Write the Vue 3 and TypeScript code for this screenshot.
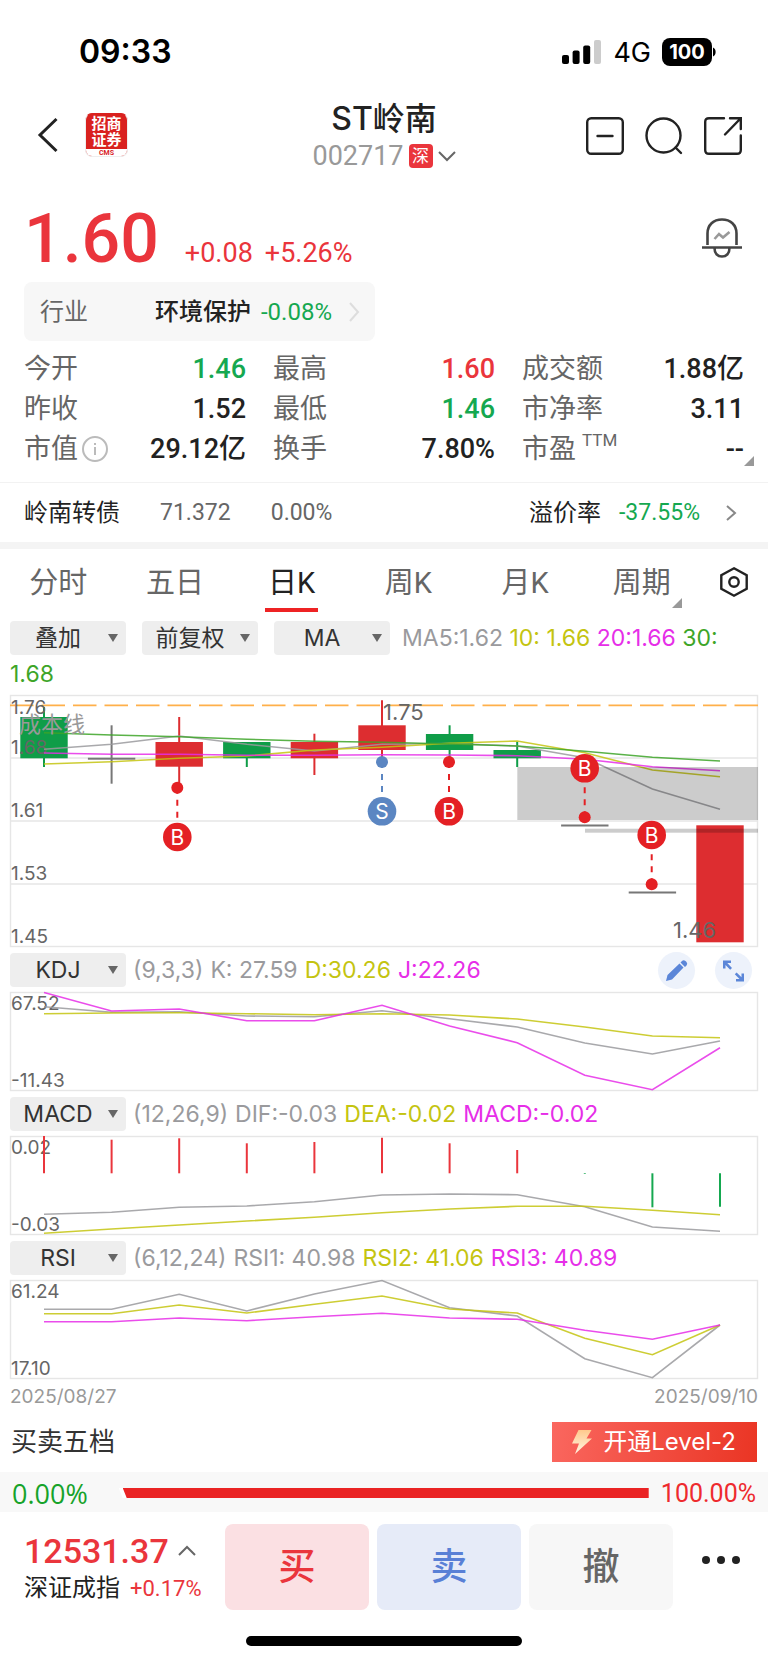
<script setup lang="ts">
import { ref } from 'vue'

interface Stat {
  label: string
  value: string
  tone?: 'up' | 'down'
  info?: boolean
  sup?: string
}

interface Series {
  tone: string
  values: number[]
}

interface Panel {
  name: string
  params: string
  legend: { tone: string; text: string }[]
  series: Series[]
  top: string
  bottom: string
  bars?: number[]
  tools?: boolean
}

interface Candle {
  tone: 'up' | 'down' | 'flat'
  top: number
  bottom: number
  high?: number
  low?: number
}

const stats: Stat[] = [
  { label: '今开', value: '1.46', tone: 'down' },
  { label: '最高', value: '1.60', tone: 'up' },
  { label: '成交额', value: '1.88亿' },
  { label: '昨收', value: '1.52' },
  { label: '最低', value: '1.46', tone: 'down' },
  { label: '市净率', value: '3.11' },
  { label: '市值', value: '29.12亿', info: true },
  { label: '换手', value: '7.80%' },
  { label: '市盈', value: '--', sup: 'TTM' },
]

const tabs = ['分时', '五日', '日K', '周K', '月K', '周期']
const activeTab = ref('日K')

const overlays = [
  { label: '叠加方式', value: '叠加' },
  { label: '复权方式', value: '前复权' },
  { label: '主图指标', value: 'MA' },
]

const candles: Candle[] = [
  { tone: 'down', top: 22, bottom: 63.3, high: 12, low: 72 },
  { tone: 'flat', top: 62.7, bottom: 64.7, high: 30.3, low: 88.7 },
  { tone: 'up', top: 47, bottom: 71.7, high: 22, low: 92 },
  { tone: 'down', top: 47, bottom: 63.3, high: 47, low: 72 },
  { tone: 'up', top: 47, bottom: 63.3, high: 38.7, low: 80 },
  { tone: 'up', top: 30.3, bottom: 55, high: 5.3, low: 64 },
  { tone: 'down', top: 39, bottom: 55, high: 30.3, low: 64 },
  { tone: 'down', top: 55, bottom: 63.3, high: 46.7, low: 72 },
  { tone: 'flat', top: 129.5, bottom: 131.5 },
  { tone: 'flat', top: 196.5, bottom: 198.5 },
  { tone: 'up', top: 130.3, bottom: 247.3 },
]

const averages: Series[] = [
  { tone: 'gray', values: [54.3, 49.3, 41, 49.3, 56, 49.3, 48.5, 51, 62.7, 94, 114.3] },
  { tone: 'olive', values: [69, 66.7, 63.3, 61, 55, 52.3, 48.3, 46, 57.7, 75, 81.7] },
  { tone: 'pink', values: [58, 59.3, 59.3, 60.3, 60.3, 59.7, 60, 60.7, 64.3, 71.7, 75.7] },
  { tone: 'green', values: [37.7, 40, 41.7, 44.3, 46.3, 47.3, 49, 51, 56.3, 62.3, 66] },
]

const priceLabels = [
  { text: '1.76', y: 18.5 },
  { text: '1.68', y: 59 },
  { text: '1.61', y: 122 },
  { text: '1.53', y: 185 },
  { text: '1.45', y: 248 },
]

const marks = [
  { kind: 'B', x: 167.3, dot: 92.7, badge: 142 },
  { kind: 'S', x: 372, dot: 67, badge: 116.3 },
  { kind: 'B', x: 439, dot: 67, badge: 116.3 },
  { kind: 'B', x: 574.7, dot: 122.3, badge: 73.3 },
  { kind: 'B', x: 641.7, dot: 189.3, badge: 140 },
]

const panels: Panel[] = [
  {
    name: 'KDJ',
    params: '(9,3,3)',
    tools: true,
    legend: [
      { tone: 'gray', text: 'K: 27.59' },
      { tone: 'olive', text: 'D:30.26' },
      { tone: 'pink', text: 'J:22.26' },
    ],
    series: [
      { tone: 'gray', values: [14.7, 20.3, 19.7, 24, 24.7, 18.7, 26.7, 35, 51, 62, 49] },
      { tone: 'olive', values: [21.7, 21, 20.7, 21.7, 22.7, 21.7, 23, 27, 35, 44, 45.7] },
      { tone: 'pink', values: [0.5, 19, 17, 28.7, 28.7, 13.3, 34, 50.7, 83.3, 97.7, 55.7] },
    ],
    top: '67.52',
    bottom: '-11.43',
  },
  {
    name: 'MACD',
    params: '(12,26,9)',
    legend: [
      { tone: 'gray', text: 'DIF:-0.03' },
      { tone: 'olive', text: 'DEA:-0.02' },
      { tone: 'pink', text: 'MACD:-0.02' },
    ],
    series: [
      { tone: 'gray', values: [78.3, 76.3, 71.3, 70, 65.7, 59, 58, 58.7, 70.7, 91, 95.3] },
      { tone: 'olive', values: [97.3, 93, 89, 85, 81.3, 76.7, 73, 70.3, 70.3, 74.3, 78.7] },
    ],
    top: '0.02',
    bottom: '-0.03',
    bars: [0, 3.7, 2.3, 7.3, 6, 1.7, 7.3, 14, 38, 71.3, 70.7],
  },
  {
    name: 'RSI',
    params: '(6,12,24)',
    legend: [
      { tone: 'gray', text: 'RSI1: 40.98' },
      { tone: 'olive', text: 'RSI2: 41.06' },
      { tone: 'pink', text: 'RSI3: 40.89' },
    ],
    series: [
      { tone: 'gray', values: [29.3, 29.3, 14.3, 31, 14, 0.5, 27.7, 36, 78.7, 97.7, 45] },
      { tone: 'olive', values: [33.7, 33.7, 25, 33, 24.3, 16, 29, 33, 58.3, 74.7, 45] },
      { tone: 'pink', values: [41.7, 41.7, 38, 40.7, 36.7, 33.3, 38, 39.3, 50.3, 59.3, 45] },
    ],
    top: '61.24',
    bottom: '17.10',
  },
]

const barZero = 37.3

function cx(index: number): number {
  return Math.round((34 + 67.6 * index) * 10) / 10
}

function points(values: number[]): string {
  return values.map((v, i) => `${cx(i)},${v}`).join(' ')
}
</script>

<template>
  <main class="page">
    <div class="status">
      <span class="clock">09:33</span>
      <span class="signal-group">
        <svg class="signal" viewBox="0 0 39 24" aria-hidden="true">
          <rect x="0" y="15" width="7" height="9" rx="2" />
          <rect x="10.600" y="10.500" width="7" height="13.500" rx="2" />
          <rect x="21.200" y="5.500" width="7" height="18.500" rx="2" />
          <rect class="dim" x="32" y="0" width="7" height="24" rx="2" />
        </svg>
        <span class="network">4G</span>
        <span class="battery">
          <span class="cell">100</span>
          <svg class="nub" viewBox="0 0 4 10" aria-hidden="true"><path d="M1 0.500C4.500 2 4.500 8 1 9.500Z" /></svg>
        </span>
      </span>
    </div>

    <header class="header">
      <div class="side">
        <button class="icon-btn" type="button" aria-label="返回">
          <svg class="back" viewBox="0 0 20 36"><path d="M18.500 2L2 18L18.500 34" /></svg>
        </button>
        <span class="brand">
          <span class="brand-name">招商<br />证券</span>
          <span class="brand-sub">CMS</span>
        </span>
      </div>
      <div class="title">
        <h1>ST岭南</h1>
        <button class="code" type="button">
          <span>002717</span>
          <span class="market">深</span>
          <svg class="caret" viewBox="0 0 18 10"><path d="M1 1L9 9L17 1" /></svg>
        </button>
      </div>
      <div class="side actions">
        <button class="icon-btn" type="button" aria-label="移出自选">
          <svg class="action" viewBox="0 0 38 38"><rect x="1.200" y="1.200" width="35.600" height="35.600" rx="4" /><path d="M11.500 19H26.500" /></svg>
        </button>
        <button class="icon-btn" type="button" aria-label="搜索">
          <svg class="action" viewBox="0 0 38 38"><circle cx="18.500" cy="18.500" r="17" /><path d="M30.500 30.500L36 36" /></svg>
        </button>
        <button class="icon-btn" type="button" aria-label="分享">
          <svg class="action" viewBox="0 0 38 38"><path d="M20 1.200H5Q1.200 1.200 1.200 5V33Q1.200 36.800 5 36.800H33Q36.800 36.800 36.800 33V18.500M21 17.500L36.500 1.500M26 1.200H36.800V12" /></svg>
        </button>
      </div>
    </header>

    <section class="quote">
      <strong class="price">1.60</strong>
      <span class="change">+0.08</span>
      <span class="change">+5.26%</span>
      <button class="icon-btn bell-btn" type="button" aria-label="提醒">
        <svg class="bell" viewBox="0 0 40 40">
          <path d="M5.500 27V15.500C5.500 7 11.500 1.500 20 1.500S34.500 7 34.500 15.500V27" />
          <path d="M0 29.500H40M12.500 30C12.500 35.500 15.500 38.500 20 38.500S27.500 35.500 27.500 30" />
          <path class="trend" d="M12.500 21L17 16L21 19.500L27.500 14" />
        </svg>
      </button>
    </section>

    <button class="industry" type="button">
      <span class="industry-label">行业</span>
      <span class="industry-name">环境保护</span>
      <span class="down">-0.08%</span>
      <svg class="more" viewBox="0 0 10 20"><path d="M1 1L9 10L1 19" /></svg>
    </button>

    <dl class="stats">
      <div v-for="s in stats" :key="s.label" class="stat">
        <dt>
          {{ s.label }}<sup v-if="s.sup">{{ s.sup }}</sup>
          <svg v-if="s.info" class="info" viewBox="0 0 26 26" aria-hidden="true">
            <circle cx="13" cy="13" r="12" />
            <path d="M13 11V19M13 7V9" />
          </svg>
        </dt>
        <dd :class="s.tone">{{ s.value }}</dd>
      </div>
      <svg class="corner stats-corner" viewBox="0 0 10 10" aria-hidden="true"><path d="M10 0V10H0Z" /></svg>
    </dl>

    <a class="bond" href="#bond">
      <span class="bond-name">岭南转债</span>
      <span class="bond-price">71.372</span>
      <span class="bond-rate">0.00%</span>
      <span class="bond-label">溢价率</span>
      <span class="down bond-premium">-37.55%</span>
      <svg class="more dark" viewBox="0 0 10 16"><path d="M1 1L9 8L1 15" /></svg>
    </a>

    <nav class="tabs">
      <button
        v-for="t in tabs"
        :key="t"
        type="button"
        class="tab"
        :class="{ active: t === activeTab }"
        @click="activeTab = t"
      >
        <span class="tab-text">{{ t }}<svg v-if="t === '周期'" class="corner tab-corner" viewBox="0 0 10 10" aria-hidden="true"><path d="M10 0V10H0Z" /></svg></span>
      </button>
      <button class="icon-btn settings" type="button" aria-label="设置">
        <svg class="hex" viewBox="0 0 28 30"><path d="M14 1.300L26.700 8.200V21.800L14 28.700L1.300 21.800V8.200Z" /><circle cx="14" cy="15" r="4.700" /></svg>
      </button>
    </nav>

    <section class="charts">
      <div class="overlay-row">
        <span v-for="o in overlays" :key="o.value" class="picker">
          <select :aria-label="o.label"><option>{{ o.value }}</option></select>
        </span>
        <span class="gray">MA5:1.62</span>&nbsp;<span class="olive">10: 1.66</span>&nbsp;<span class="pink">20:1.66</span>&nbsp;<span class="green">30:</span><wbr /><span class="green">1.68</span>
      </div>

      <svg class="chart" viewBox="0 0 748 252" role="img" aria-label="日K线">
        <rect class="frame" x="0.500" y="0.500" width="747" height="251" />
        <path class="frame" d="M0 63H748M0 126H748M0 189H748" />
        <path class="cost" d="M0 10.300H748" />
        <g v-for="(c, i) in candles" :key="i" :class="['candle', c.tone]">
          <path v-if="c.high !== undefined" :d="`M${cx(i)} ${c.high}V${c.low}`" />
          <rect :x="cx(i) - 23.700" :y="c.top" width="47.400" :height="c.bottom - c.top" />
        </g>
        <text v-for="l in priceLabels" :key="l.text" class="axis" x="1" :y="l.y">{{ l.text }}</text>
        <polyline v-for="a in averages" :key="a.tone" :class="['line', a.tone]" :points="points(a.values)" />
        <text class="cost-label" x="9" y="37">成本线</text>
        <rect class="gap" x="507.300" y="72" width="240.700" height="53" />
        <rect class="gap" x="575" y="133.700" width="173" height="4" />
        <text class="extreme" x="373" y="24.500">1.75</text>
        <text class="extreme" x="663" y="242.500">1.46</text>
        <g v-for="m in marks" :key="m.x" :class="['mark', m.kind]">
          <path :d="`M${m.x} ${m.dot}V${m.badge}`" />
          <circle :cx="m.x" :cy="m.dot" r="6" />
          <circle :cx="m.x" :cy="m.badge" r="14.300" />
          <text :x="m.x" :y="m.badge + 8">{{ m.kind }}</text>
        </g>
      </svg>

      <template v-for="p in panels" :key="p.name">
        <div class="panel-row">
          <span class="picker">
            <select :aria-label="p.name + ' 指标'"><option>{{ p.name }}</option></select>
          </span>
          <span class="gray">{{ p.params }}</span>
          <span v-for="g in p.legend" :key="g.text" :class="g.tone">{{ g.text }}</span>
          <span v-if="p.tools" class="tools">
            <button class="round" type="button" aria-label="画线">
              <svg viewBox="0 0 37 37"><path d="M8 29L9.500 23L21.500 11.500L25.500 15.500L14 27.500Z M22.500 10.500L24 9Q25.500 7.500 27.500 9L28.500 10Q30 11.500 28.500 13.500L27 15Z" /></svg>
            </button>
            <button class="round" type="button" aria-label="全屏">
              <svg viewBox="0 0 37 37"><path d="M8 8.500H16V11H12.300L17 16L15.200 17.800L10.500 13V16.500H8Z M29 29.500H21V27H24.500L19.800 22.300L21.600 20.500L26.500 25.200V21.500H29Z" /></svg>
            </button>
          </span>
        </div>
        <svg class="chart" viewBox="0 0 748 99" role="img" :aria-label="p.name">
          <rect class="frame" x="0.500" y="0.500" width="747" height="98" />
          <text class="axis" x="1" y="18">{{ p.top }}</text>
          <text class="axis" x="1" y="94.500">{{ p.bottom }}</text>
          <path
            v-for="(b, i) in p.bars ?? []"
            :key="i"
            :class="['bar', b < barZero ? 'up' : 'down']"
            :d="`M${cx(i)} ${barZero}V${b}`"
          />
          <polyline v-for="s in p.series" :key="s.tone" :class="['line', s.tone]" :points="points(s.values)" />
        </svg>
      </template>

      <div class="dates"><span>2025/08/27</span><span>2025/09/10</span></div>
    </section>

    <section class="depth">
      <h2>买卖五档</h2>
      <button class="level2" type="button">
        <svg class="bolt" viewBox="0 0 20 24">
          <defs>
            <linearGradient id="boltFill" x1="0" y1="0" x2="0" y2="1">
              <stop offset="0" stop-color="#ffc98c" />
              <stop offset="1" stop-color="#fff6e4" />
            </linearGradient>
          </defs>
          <path d="M6.500 0H19.500L14.500 8.500H20L3 24L7 13.500H0Z" />
        </svg>
        <span>开通Level-2</span>
      </button>
    </section>

    <div class="ratio">
      <span class="ratio-buy">0.00%</span>
      <span class="ratio-bar"></span>
      <span class="ratio-sell">100.00%</span>
    </div>

    <footer class="footer">
      <button class="index" type="button">
        <span class="index-value">12531.37<svg class="caret" viewBox="0 0 18 10"><path d="M1 9L9 1L17 9" /></svg></span>
        <span class="index-name">深证成指<b>+0.17%</b></span>
      </button>
      <button class="trade buy" type="button">买</button>
      <button class="trade sell" type="button">卖</button>
      <button class="trade cancel" type="button">撤</button>
      <button class="icon-btn overflow" type="button" aria-label="更多">
        <svg class="dots" viewBox="0 0 38 8"><circle cx="4" cy="4" r="4" /><circle cx="19" cy="4" r="4" /><circle cx="34" cy="4" r="4" /></svg>
      </button>
    </footer>
    <div class="home"></div>
  </main>
</template>

<style>
body {
  margin: 0;
  background: #fff;
}
</style>

<style scoped>
.page {
  font-family: Roboto, "Noto Sans CJK SC", sans-serif;
  color: #222;
  background: #fff;
  line-height: 1;
}
.page * {
  box-sizing: border-box;
}
svg {
  display: block;
  fill: none;
  overflow: visible;
}
button {
  font: inherit;
  color: inherit;
  background: none;
  border: 0;
  padding: 0;
  margin: 0;
  cursor: pointer;
}
.up { color: #ea353c; }
.down { color: #15a850; }
.gray { color: #9a9a9d; }
.olive { color: #c4c410; }
.pink { color: #e62ee8; }
.green { color: #3da528; }

.status {
  display: flex;
  align-items: center;
  justify-content: space-between;
  height: 102px;
  padding: 2px 52px 0 79px;
  font-family: Inter, sans-serif;
  color: #000;
}
.clock {
  font-size: 32px;
  font-weight: 600;
}
.signal-group {
  display: flex;
  align-items: center;
}
.signal {
  width: 39px;
  height: 24px;
  fill: #000;
}
.signal .dim { fill: #ccc; }
.network {
  margin: 0 11px 0 12px;
  font-size: 27px;
}
.battery {
  display: flex;
  align-items: center;
}
.cell {
  width: 50px;
  height: 28px;
  border-radius: 8px;
  background: #000;
  color: #fff;
  font-size: 20px;
  font-weight: 700;
  line-height: 28px;
  text-align: center;
}
.nub {
  width: 4px;
  height: 10px;
  fill: #000;
}

.header {
  display: grid;
  grid-template-columns: 1fr auto 1fr;
  align-items: start;
  padding: 0 26px;
  height: 92px;
}
.side {
  display: flex;
  align-items: center;
  padding: 11px 0 0 12px;
  gap: 27px;
}
.actions {
  padding: 15px 0 0;
  justify-content: flex-end;
  gap: 21px;
}
.back {
  width: 20px;
  height: 36px;
  stroke: #222;
  stroke-width: 3;
}
.brand {
  width: 43px;
  height: 44px;
  border-radius: 7px;
  overflow: hidden;
  background: #d9211f;
  border: 1px solid #eee;
  border-top-color: #d9211f;
  text-align: center;
}
.brand-name {
  display: block;
  height: 35px;
  padding-top: 2px;
  color: #fff;
  font-size: 15px;
  font-weight: 700;
  line-height: 16px;
}
.brand-sub {
  display: block;
  height: 8px;
  background: #fff;
  color: #d9211f;
  font-size: 7px;
  font-weight: 700;
  line-height: 8px;
}
.title {
  text-align: center;
}
h1 {
  margin: 0;
  font-family: Inter, "Noto Sans CJK SC", sans-serif;
  font-size: 32px;
  font-weight: 500;
  line-height: 34px;
}
.code {
  display: flex;
  align-items: center;
  gap: 5px;
  margin-top: 4px;
  font-size: 27px;
  line-height: 32px;
  color: #999;
}
.market {
  width: 24px;
  height: 24px;
  border-radius: 4px;
  background: #ea353c;
  color: #fff;
  font-size: 17px;
  line-height: 24px;
}
.caret {
  width: 18px;
  height: 10px;
  stroke: #666;
  stroke-width: 2;
}
.action {
  width: 38px;
  height: 38px;
  stroke: #222;
  stroke-width: 2.4;
  stroke-linecap: round;
}

.quote {
  display: flex;
  align-items: baseline;
  height: 88px;
  padding: 0 26px 0 24px;
  color: #ea353c;
}
.price {
  font-size: 68px;
  font-weight: 500;
  line-height: 90px;
  margin-right: 26px;
}
.change {
  font-size: 27px;
  margin-right: 12px;
}
.bell-btn {
  align-self: flex-start;
  margin: 24px 0 0 auto;
}
.bell {
  width: 40px;
  height: 40px;
  stroke: #444;
  stroke-width: 2.6;
}
.bell .trend {
  stroke: #999;
}

.industry {
  display: flex;
  align-items: center;
  width: calc(50% - 33px);
  height: 59px;
  margin-left: 24px;
  padding: 0 16px;
  border-radius: 8px;
  background: #f7f7f7;
  font-size: 24px;
}
.industry-label {
  color: #666;
  margin-right: auto;
}
.industry-name {
  font-weight: 500;
  margin-right: 10px;
}
.more {
  width: 10px;
  height: 20px;
  margin-left: 17px;
  stroke: #ddd;
  stroke-width: 2;
}
.more.dark {
  height: 16px;
  margin-left: 26px;
  stroke: #888;
}

.stats {
  position: relative;
  display: grid;
  grid-template-columns: repeat(3, 1fr);
  column-gap: 27px;
  margin: 0;
  padding: 8px 24px 13px;
  border-bottom: 1px solid #f2f2f2;
}
.stat {
  display: flex;
  align-items: center;
  justify-content: space-between;
  height: 40px;
  font-size: 27px;
}
dt {
  display: flex;
  align-items: center;
  color: #666;
}
dd {
  margin: 0;
  font-weight: 500;
}
sup {
  align-self: flex-start;
  margin-left: 6px;
  font-size: 17px;
  line-height: 8px;
}
.info {
  width: 26px;
  height: 26px;
  margin-left: 4px;
  stroke: #bbb;
  stroke-width: 2;
}
.corner {
  position: absolute;
  width: 10px;
  height: 10px;
  fill: #999;
}
.stats-corner {
  right: 14px;
  bottom: 16px;
}

.bond {
  display: flex;
  align-items: center;
  height: 66px;
  padding: 0 32px 0 24px;
  border-bottom: 7px solid #f4f4f4;
  font-size: 24px;
  color: #222;
  text-decoration: none;
}
.bond-price,
.bond-rate {
  margin-left: 40px;
  font-size: 23px;
  color: #666;
}
.bond-label {
  margin-left: auto;
}
.bond-premium {
  margin-left: 18px;
  font-size: 23px;
}

.tabs {
  display: grid;
  grid-template-columns: repeat(6, 1fr) 68px;
  height: 71px;
}
.tab {
  display: flex;
  flex-direction: column;
  align-items: center;
  font-size: 29px;
  color: #666;
}
.tab-text {
  position: relative;
  height: 63px;
  padding: 20px 3px 0;
  border-bottom: 4px solid transparent;
}
.tab.active { color: #222; }
.tab.active .tab-text { border-bottom-color: #ee2324; }
.tab-corner {
  right: -8px;
  bottom: 0;
}
.settings {
  padding: 18px 20px 23px;
}
.hex {
  width: 28px;
  height: 30px;
  stroke: #222;
  stroke-width: 2.4;
}

.charts {
  padding: 0 10px;
  font-family: Inter, "Noto Sans CJK SC", sans-serif;
  font-size: 23px;
}
.overlay-row {
  line-height: 36px;
  padding-bottom: 3px;
}
.overlay-row .picker {
  margin: 1px 16px 1px 0;
  vertical-align: top;
}
.overlay-row .picker:nth-child(3) {
  margin-right: 12px;
}
.picker {
  position: relative;
  display: inline-block;
  width: 116px;
  height: 34px;
}
.picker::after {
  content: "";
  position: absolute;
  right: 8px;
  top: 13px;
  border: 5px solid transparent;
  border-top: 8px solid #666;
  border-bottom: 0;
  pointer-events: none;
}
select {
  appearance: none;
  display: block;
  width: 100%;
  height: 100%;
  margin: 0;
  padding: 0 20px 0 0;
  border: 0;
  border-radius: 4px;
  background: #eee;
  color: #333;
  font: inherit;
  line-height: 34px;
  text-align: center;
  text-align-last: center;
}
.panel-row {
  display: flex;
  align-items: center;
  height: 45px;
  padding-top: 1px;
  gap: 7px;
}
.tools {
  display: flex;
  gap: 20px;
  margin: 0 6px 0 auto;
}
.round {
  width: 37px;
  height: 37px;
  border-radius: 50%;
  background: #edf2fb;
}
.round svg {
  fill: #5b86d8;
}
.chart {
  width: 100%;
  height: auto;
}
.frame { stroke: #e6e6e6; stroke-width: 1.4; }
.cost { stroke: #ffb04a; stroke-width: 1.8; stroke-dasharray: 23.5 8; }
.candle path { stroke: currentColor; stroke-width: 2; }
.candle rect { fill: currentColor; }
.candle.up { color: #dd2d30; }
.candle.down { color: #0f9d48; }
.candle.flat { color: #777; }
.line { stroke: currentColor; stroke-width: 1.6; opacity: 0.85; }
.bar { stroke: currentColor; stroke-width: 2; }
.axis { fill: #666; font-size: 19px; }
.cost-label { fill: #999; font-size: 22px; }
.extreme { fill: #666; font-size: 22px; }
.gap { fill: #000; fill-opacity: 0.2; }
.mark { color: #e42024; }
.mark.S { color: #5b86c2; }
.mark path { stroke: currentColor; stroke-width: 2; stroke-dasharray: 6 6; }
.mark circle { fill: currentColor; }
.mark text { fill: #fff; font-size: 21px; text-anchor: middle; }

.dates {
  display: flex;
  justify-content: space-between;
  padding: 8px 0 10px;
  font-size: 19px;
  line-height: 20px;
  color: #999;
}

.depth {
  display: flex;
  align-items: center;
  justify-content: space-between;
  padding: 5px 11px 10px;
}
h2 {
  margin: 0;
  font-size: 26px;
  font-weight: 400;
  color: #333;
}
.level2 {
  display: flex;
  align-items: center;
  gap: 11px;
  height: 40px;
  padding: 0 21px 0 20px;
  background: linear-gradient(100deg, #fa675f, #ea3524);
  color: #fff;
  font-family: Inter, "Noto Sans CJK SC", sans-serif;
  font-size: 24px;
}
.bolt {
  width: 20px;
  height: 24px;
  fill: url(#boltFill);
}

.ratio {
  display: flex;
  align-items: center;
  height: 40px;
  padding: 2px 12px 0;
  background: #f8f8f8;
  font-size: 25px;
}
.ratio-buy {
  color: #16a32a;
  font-family: "Open Sans", sans-serif;
  font-size: 27px;
}
.ratio-sell { color: #ee2a2e; }
.ratio-bar {
  flex: 1;
  height: 10px;
  margin: 0 12px 0 31px;
  background: #fff;
  clip-path: polygon(0 0, 100% 0, 100% 100%, 4px 100%);
}
.ratio-bar::before {
  content: "";
  display: block;
  height: 10px;
  margin-left: 4px;
  background: #ea2324;
  clip-path: polygon(0 0, 100% 0, 100% 100%, 4px 100%);
}

.footer {
  display: flex;
  align-items: center;
  gap: 8px;
  padding: 12px 28px 26px 24px;
}
.index {
  flex: 193;
  display: flex;
  flex-direction: column;
  gap: 8px;
  text-align: left;
  white-space: nowrap;
}
.index-value {
  display: flex;
  align-items: center;
  gap: 9px;
  color: #ea353c;
  font-size: 34px;
  font-weight: 500;
}
.index-name {
  font-size: 24px;
}
.index-name b {
  margin-left: 10px;
  font-size: 22px;
  font-weight: 400;
  color: #ea353c;
}
.trade {
  flex: 144;
  height: 86px;
  border-radius: 8px;
  font-size: 37px;
  font-weight: 500;
}
.buy { background: #fbe0e3; color: #ea353c; }
.sell { background: #e6ebf8; color: #5980d6; }
.cancel { background: #f7f7f7; color: #666; }
.overflow {
  flex: 59;
  display: flex;
  justify-content: flex-end;
  padding-bottom: 14px;
}
.dots {
  width: 38px;
  height: 8px;
  fill: #222;
}
.home {
  width: 36%;
  height: 10px;
  margin: 0 auto 17px;
  border-radius: 5px;
  background: #000;
}
</style>
